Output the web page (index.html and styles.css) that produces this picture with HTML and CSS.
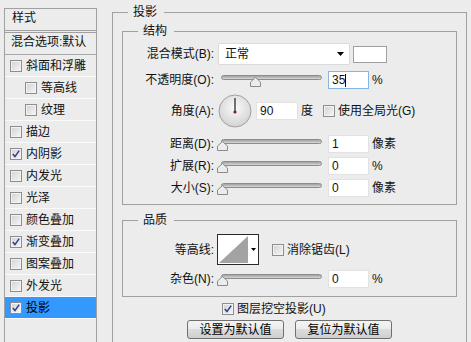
FILE: index.html
```html
<!DOCTYPE html>
<html>
<head>
  <title>图层样式</title>
  <link rel="stylesheet" href="styles.css">
</head>
<body>
  <div class="dialog">
    <div class="style-list">
      <div class="list-head">样式</div>
      <div class="list-blend">混合选项:默认</div>
      <div class="list-item"><span class="cb"></span>斜面和浮雕</div>
      <div class="list-item sub"><span class="cb"></span>等高线</div>
      <div class="list-item sub"><span class="cb"></span>纹理</div>
      <div class="list-item"><span class="cb"></span>描边</div>
      <div class="list-item"><span class="cb"><svg width="10" height="10" viewBox="0 0 10 10"><path d="M1.8 5 L4 7.6 L8.2 1.6" fill="none" stroke="#2c3d8c" stroke-width="1.5"/></svg></span>内阴影</div>
      <div class="list-item"><span class="cb"></span>内发光</div>
      <div class="list-item"><span class="cb"></span>光泽</div>
      <div class="list-item"><span class="cb"></span>颜色叠加</div>
      <div class="list-item"><span class="cb"><svg width="10" height="10" viewBox="0 0 10 10"><path d="M1.8 5 L4 7.6 L8.2 1.6" fill="none" stroke="#2c3d8c" stroke-width="1.5"/></svg></span>渐变叠加</div>
      <div class="list-item"><span class="cb"></span>图案叠加</div>
      <div class="list-item"><span class="cb"></span>外发光</div>
      <div class="list-item active"><span class="cb"><svg width="10" height="10" viewBox="0 0 10 10"><path d="M1.8 5 L4 7.6 L8.2 1.6" fill="none" stroke="#2c3d8c" stroke-width="1.5"/></svg></span>投影</div>
    </div>

    <fieldset class="group outer">
      <legend>投影</legend>

      <fieldset class="group structure">
        <legend>结构</legend>

        <div class="row row-blend">
          <span class="row-label">混合模式(B):</span>
          <div class="select">
            <span>正常</span>
            <svg width="7" height="4" viewBox="0 0 7 4"><path d="M0 0 H7 L3.5 4 Z" fill="#000"/></svg>
          </div>
          <span class="swatch"></span>
        </div>

        <div class="row row-field first">
          <span class="row-label">不透明度(O):</span>
          <div class="slider">
            <span class="track"></span>
            <svg class="thumb" style="left: 32px" width="11" height="10" viewBox="0 0 11 10"><path d="M5.5 0.5 L10.5 5 V9.5 H0.5 V5 Z" fill="#ececec" stroke="#8a8a8a"/></svg>
          </div>
          <div class="field focus">35<span class="caret"></span></div>
          <span class="unit">%</span>
        </div>

        <div class="row row-angle">
          <span class="row-label">角度(A):</span>
          <svg class="dial" width="34" height="34" viewBox="0 0 34 34">
            <defs>
              <radialGradient id="dial-fill" cx="50%" cy="40%" r="60%">
                <stop offset="0" stop-color="#fbfbfb"/>
                <stop offset="1" stop-color="#d2d2d2"/>
              </radialGradient>
            </defs>
            <circle cx="17" cy="17" r="16" fill="url(#dial-fill)" stroke="#a0a0a0"/>
            <line x1="17" y1="18" x2="17" y2="4" stroke="#3b3b3b" stroke-width="1.4"/>
            <circle cx="17" cy="18" r="1.6" fill="#6a2a2a"/>
          </svg>
          <div class="field angle">90</div>
          <span class="unit">度</span>
          <span class="cb global"></span>
          <span class="cb-text">使用全局光(G)</span>
        </div>

        <div class="row row-field first-after-angle">
          <span class="row-label">距离(D):</span>
          <div class="slider">
            <span class="track"></span>
            <svg class="thumb" style="left: -1px" width="11" height="10" viewBox="0 0 11 10"><path d="M5.5 0.5 L10.5 5 V9.5 H0.5 V5 Z" fill="#ececec" stroke="#8a8a8a"/></svg>
          </div>
          <div class="field">1</div>
          <span class="unit">像素</span>
        </div>

        <div class="row row-field">
          <span class="row-label">扩展(R):</span>
          <div class="slider">
            <span class="track"></span>
            <svg class="thumb" style="left: -1px" width="11" height="10" viewBox="0 0 11 10"><path d="M5.5 0.5 L10.5 5 V9.5 H0.5 V5 Z" fill="#ececec" stroke="#8a8a8a"/></svg>
          </div>
          <div class="field">0</div>
          <span class="unit">%</span>
        </div>

        <div class="row row-field">
          <span class="row-label">大小(S):</span>
          <div class="slider">
            <span class="track"></span>
            <svg class="thumb" style="left: -1px" width="11" height="10" viewBox="0 0 11 10"><path d="M5.5 0.5 L10.5 5 V9.5 H0.5 V5 Z" fill="#ececec" stroke="#8a8a8a"/></svg>
          </div>
          <div class="field">0</div>
          <span class="unit">像素</span>
        </div>
      </fieldset>

      <fieldset class="group quality">
        <legend>品质</legend>

        <div class="row row-contour">
          <span class="row-label">等高线:</span>
          <div class="contour">
            <svg width="29" height="27" viewBox="0 0 29 27"><polygon points="0,27 29,0 29,27" fill="#a3a3a3"/></svg>
            <span class="contour-arrow"><svg width="5" height="3" viewBox="0 0 5 3"><path d="M0 0 H5 L2.5 3 Z" fill="#000"/></svg></span>
          </div>
          <span class="cb aa"></span>
          <span class="cb-text">消除锯齿(L)</span>
        </div>

        <div class="row row-field noise">
          <span class="row-label">杂色(N):</span>
          <div class="slider">
            <span class="track"></span>
            <svg class="thumb" style="left: -1px" width="11" height="10" viewBox="0 0 11 10"><path d="M5.5 0.5 L10.5 5 V9.5 H0.5 V5 Z" fill="#ececec" stroke="#8a8a8a"/></svg>
          </div>
          <div class="field">0</div>
          <span class="unit">%</span>
        </div>
      </fieldset>

      <div class="knockout">
        <span class="cb"><svg width="10" height="10" viewBox="0 0 10 10"><path d="M1.8 5 L4 7.6 L8.2 1.6" fill="none" stroke="#2c3d8c" stroke-width="1.5"/></svg></span>
        <span class="cb-text">图层挖空投影(U)</span>
      </div>

      <div class="buttons">
        <button type="button">设置为默认值</button>
        <button type="button">复位为默认值</button>
      </div>
    </fieldset>
  </div>
</body>
</html>
```

FILE: styles.css
```css
/* dialog base */
body {
  margin: 0;
  background-color: #ececec;
  font-family: "Liberation Sans", "Noto Sans CJK SC", sans-serif;
  font-size: 12px;
  line-height: 14px;
  color: #111;
  overflow: hidden;
}

.dialog {
  display: flex;
  align-items: flex-start;
  gap: 15px;
  padding-left: 4px;
}

/* left style list */
.style-list {
  width: 93px;
  height: 345px;
  margin-top: 8px;
  box-sizing: border-box;
  border: 1px solid #a0a0a0;
}

.list-head {
  height: 21px;
  padding-left: 7px;
  padding-top: 2px;
  box-sizing: border-box;
  border-bottom: 3px double #a0a0a0;
  height: 24px;
}

.list-blend {
  height: 21px;
  line-height: 19px;
  padding-left: 6px;
  border-bottom: 1px solid #a8a8a8;
}

.list-item {
  display: flex;
  align-items: center;
  height: 21px;
  padding-left: 5px;
  border-bottom: 1px solid #fafafa;
}

.list-item.sub {
  padding-left: 20px;
}

.list-item .cb {
  margin-right: 4px;
}

.list-item.active {
  background-color: #3399ff;
  color: #000;
}

/* checkbox */
.cb {
  display: inline-flex;
  align-items: center;
  justify-content: center;
  flex: none;
  width: 12px;
  height: 12px;
  box-sizing: border-box;
  border: 1px solid #8e8e8e;
  background: linear-gradient(135deg, #d2d2d2, #f6f6f6);
  box-shadow: inset 0 0 0 1px #f2f2f2;
}

.cb-text {
  margin-left: 3px;
}

/* group boxes */
.group {
  margin: 0;
  min-width: 0;
  border: 1px solid #a0a0a0;
}

.group legend {
  padding: 0 7px 0 5px;
  line-height: 14px;
}

.outer {
  width: 355px;
  box-sizing: border-box;
  margin-top: 5px;
  padding: 5px 9px 40px;
}

.outer > legend {
  margin-left: 6px;
}

.structure {
  padding: 5px 0 7px;
}

.quality {
  margin-top: 8px;
  padding: 7px 0 8px;
}

.structure > legend,
.quality > legend {
  margin-left: 15px;
}

/* rows */
.row {
  display: flex;
  align-items: center;
}

.row-label {
  width: 91px;
  margin-right: 4px;
  text-align: right;
  flex: none;
}

.row-blend {
  height: 22px;
}

.row-field {
  height: 18px;
  margin-top: 4px;
}

.row-field.first {
  margin-top: 6px;
}

.row-field.first-after-angle {
  margin-top: 7px;
}

.row-angle {
  height: 34px;
  margin-top: 5px;
}

.select {
  display: flex;
  align-items: center;
  justify-content: space-between;
  width: 132px;
  height: 22px;
  box-sizing: border-box;
  padding: 0 5px 0 6px;
  background-color: #fff;
  border: 1px solid #dadada;
  border-radius: 2px;
}

.swatch {
  width: 34px;
  height: 17px;
  margin-left: 3px;
  box-sizing: border-box;
  border: 1px solid #a0a0a0;
  background-color: #fff;
}

.slider {
  position: relative;
  width: 104px;
  height: 18px;
  flex: none;
}

.track {
  position: absolute;
  left: 3px;
  right: 0;
  top: 4px;
  height: 5px;
  box-sizing: border-box;
  border: 1px solid #8d8d8d;
  border-radius: 3px;
  background: linear-gradient(#a0a0a0, #d8d8d8);
}

.thumb {
  position: absolute;
  top: 6px;
}

.field {
  display: flex;
  align-items: center;
  width: 41px;
  height: 18px;
  margin-left: 6px;
  padding-left: 3px;
  box-sizing: border-box;
  background-color: #fff;
  border: 1px solid #e2e2e2;
  color: #111;
  flex: none;
}

.field.focus {
  border-color: #86b6e6;
}

.caret {
  display: inline-block;
  width: 1px;
  height: 13px;
  background-color: #000;
}

.field.angle {
  width: 42px;
  margin-left: 4px;
}

.unit {
  margin-left: 3px;
}

.dial {
  flex: none;
}

.cb.global {
  margin-left: 10px;
}

/* quality */
.row-contour {
  height: 31px;
}

.contour {
  display: flex;
  align-items: center;
  width: 42px;
  height: 31px;
  box-sizing: border-box;
  margin-left: -1px;
  border: 1px solid #2a2a2a;
  background-color: #fff;
  flex: none;
}

.contour svg {
  margin-left: 1px;
}

.contour-arrow {
  flex: 1;
  display: flex;
  justify-content: center;
}

.cb.aa {
  margin-left: 13px;
}

.noise {
  margin-top: 5px;
}

.knockout {
  display: flex;
  align-items: center;
  height: 14px;
  margin-top: 5px;
  padding-left: 100px;
}

.buttons {
  display: flex;
  justify-content: center;
  gap: 11px;
  margin-top: 4px;
}

.buttons button {
  width: 97px;
  height: 19px;
  padding: 0;
  font-family: "Liberation Sans", "Noto Sans CJK SC", sans-serif;
  font-size: 12px;
  line-height: 14px;
  color: #000;
  border: 1px solid #707070;
  border-radius: 3px;
  background: linear-gradient(#f4f4f4, #ebebeb 50%, #dcdcdc 50%, #cfcfcf);
}
```
